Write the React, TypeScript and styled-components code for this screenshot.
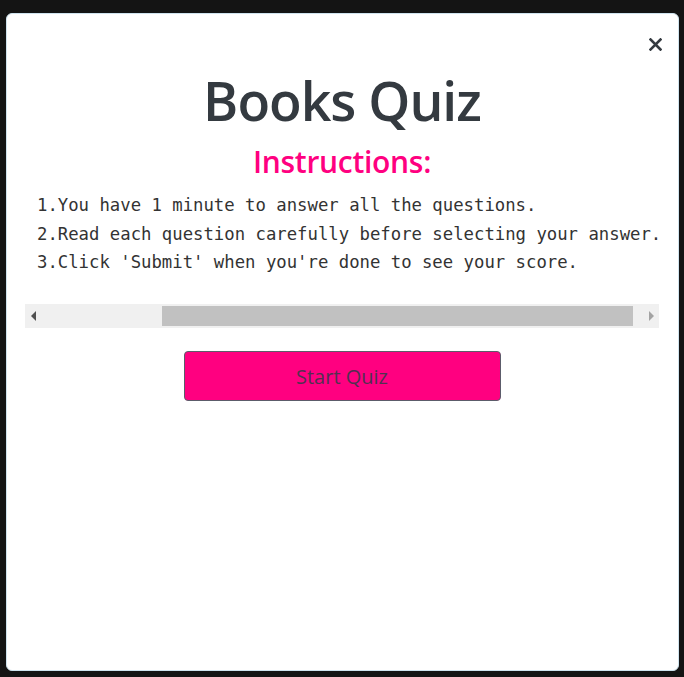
import React from "react";
import styled, { createGlobalStyle } from "styled-components";

const Global = createGlobalStyle`
  html, body { margin: 0; padding: 0; background: #141414; }
  body { font-family: "Open Sans", "Noto Sans", sans-serif; }
  * { box-sizing: border-box; }
`;

const Modal = styled.div`
  margin: 13px 5px 6px 6px;
  height: 658px;
  background: #ffffff;
  border: 1px solid #cfe3ee;
  border-radius: 6px;
  padding: 20px 19px 20px 18px;
  display: flex;
  flex-direction: column;
`;

const CloseRow = styled.div`
  display: flex;
  justify-content: flex-end;
  height: 20px;
  align-items: center;
  margin-right: -3px;
`;

const CloseButton = styled.button`
  border: none;
  background: transparent;
  padding: 0;
  width: 14px;
  height: 14px;
  display: flex;
  align-items: center;
  justify-content: center;
  cursor: pointer;
`;

const Title = styled.h1`
  margin: 11px 0 0;
  font-size: 53.5px;
  line-height: 72px;
  font-weight: 600;
  color: #343a40;
  text-align: center;
  letter-spacing: -1px;
`;

const Subtitle = styled.h2`
  margin: 5px 0 0;
  font-size: 30px;
  line-height: 40px;
  font-weight: 600;
  color: #ff0080;
  text-align: center;
  letter-spacing: -0.3px;
`;

const Pre = styled.pre`
  margin: 9px 0 0;
  padding: 0 0 27px 12px;
  font-family: "DejaVu Sans Mono", "Liberation Mono", monospace;
  font-size: 17.3px;
  line-height: 28.5px;
  color: #333333;
  overflow: hidden;
  white-space: pre;
`;

const Scrollbar = styled.div`
  display: flex;
  height: 24px;
  background: #f0f0f0;
  align-items: stretch;
`;

const ArrowButton = styled.div`
  width: 17px;
  flex: none;
  display: flex;
  align-items: center;
  justify-content: center;
`;

const Track = styled.div`
  flex: 1;
  display: flex;
  align-items: center;
`;

const Thumb = styled.div`
  height: 20px;
  background: #c1c1c1;
`;

const ButtonRow = styled.div`
  display: flex;
  justify-content: center;
  margin-top: 23px;
`;

const StartButton = styled.button`
  width: 317px;
  height: 50px;
  background: #ff0080;
  border: 1px solid #5c5c6a;
  border-radius: 4px;
  font-family: "Open Sans", "Noto Sans", sans-serif;
  font-size: 20px;
  color: #513050;
  cursor: pointer;
  padding: 2px 0 0 0;
`;

export default function App() {
  const trackStart = 42;
  const thumbStart = 162;
  const thumbEnd = 633;
  return (
    <>
      <Global />
      <Modal>
        <CloseRow>
          <CloseButton aria-label="Close">
            <svg width="13" height="13" viewBox="0 0 13 13">
              <path d="M1.5 1.5 L11.5 11.5 M11.5 1.5 L1.5 11.5" stroke="#343a40" strokeWidth="2.6" strokeLinecap="square" />
            </svg>
          </CloseButton>
        </CloseRow>
        <Title>Books Quiz</Title>
        <Subtitle>Instructions:</Subtitle>
        <Pre>{`1.You have 1 minute to answer all the questions.
2.Read each question carefully before selecting your answer.
3.Click 'Submit' when you're done to see your score.`}</Pre>
        <Scrollbar>
          <ArrowButton>
            <svg width="6" height="10" viewBox="0 0 6 10">
              <path d="M5 0 L0 5 L5 10 Z" fill="#505050" />
            </svg>
          </ArrowButton>
          <Track>
            <Thumb style={{ marginLeft: thumbStart - trackStart, width: thumbEnd - thumbStart }} />
          </Track>
          <ArrowButton>
            <svg width="6" height="10" viewBox="0 0 6 10">
              <path d="M1 0 L6 5 L1 10 Z" fill="#a3a3a3" />
            </svg>
          </ArrowButton>
        </Scrollbar>
        <ButtonRow>
          <StartButton>Start Quiz</StartButton>
        </ButtonRow>
      </Modal>
    </>
  );
}
